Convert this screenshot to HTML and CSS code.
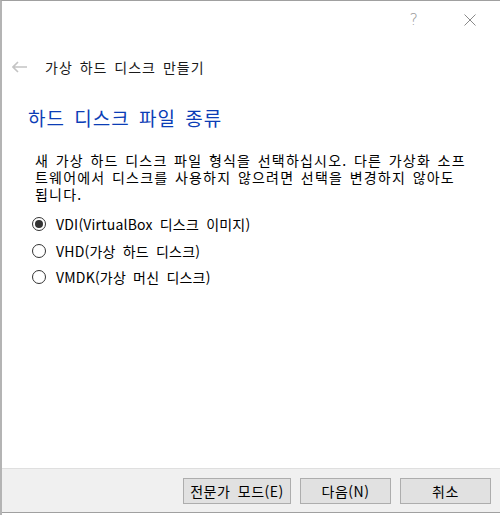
FILE: index.html
```html
<!DOCTYPE html>
<html lang="ko">
<head>
    <meta charset="UTF-8">
    <title>가상 하드 디스크 만들기</title>
    <link rel="stylesheet" href="styles.css">
</head>
<body>
    <div class="window">
        <div class="titlebar">
            <span class="help">?</span>
            <svg class="close" width="12" height="12" viewBox="0 0 12 12">
                <path d="M0.5 0.5 L11.5 11.5 M11.5 0.5 L0.5 11.5" stroke="#8a8a8a" stroke-width="1" fill="none"/>
            </svg>
        </div>

        <div class="header">
            <svg class="back" width="16" height="12" viewBox="0 0 16 12">
                <path d="M1 6 H15 M6 1 L1 6 L6 11" stroke="#c4c4c4" stroke-width="1.6" fill="none"/>
            </svg>
            <span class="title">가상 하드 디스크 만들기</span>
        </div>

        <div class="page">
            <h2 class="heading">하드 디스크 파일 종류</h2>
            <p class="desc">새 가상 하드 디스크 파일 형식을 선택하십시오. 다른 가상화 소프트웨어에서 디스크를 사용하지 않으려면 선택을 변경하지 않아도 됩니다.</p>

            <div class="options">
                <label class="option">
                    <input type="radio" name="format" checked>
                    <span>VDI(VirtualBox 디스크 이미지)</span>
                </label>
                <label class="option">
                    <input type="radio" name="format">
                    <span>VHD(가상 하드 디스크)</span>
                </label>
                <label class="option">
                    <input type="radio" name="format">
                    <span>VMDK(가상 머신 디스크)</span>
                </label>
            </div>
        </div>

        <div class="footer">
            <button class="btn btn-wide">전문가 모드(E)</button>
            <button class="btn">다음(N)</button>
            <button class="btn">취소</button>
        </div>
    </div>
</body>
</html>
```

FILE: styles.css
```css
* {
    box-sizing: border-box;
    margin: 0;
    padding: 0;
}

body {
    font-family: "Noto Sans CJK KR", "Noto Sans", sans-serif;
    font-size: 14px;
    color: #000;
    background: #fff;
}

.window {
    height: 515px;
    display: flex;
    flex-direction: column;
    border-top: 1px solid #a0a0a0;
    border-left: 2px solid #b4b4b4;
}

.titlebar {
    height: 36px;
    display: flex;
    justify-content: flex-end;
    align-items: center;
    gap: 46px;
    padding-right: 24px;
}

.help {
    color: #9a9a9a;
    font-family: "DejaVu Sans", sans-serif;
    font-size: 16px;
    font-weight: 300;
}

.close {
    margin-top: 2px;
}

.header {
    height: 60px;
    display: flex;
    align-items: center;
    padding-left: 10px;
    gap: 17px;
}

.title {
    font-size: 14px;
    color: #1a1a1a;
    letter-spacing: 1px;
    word-spacing: 2px;
}

.page {
    padding: 0 24px 0 26px;
}

.heading {
    font-size: 19px;
    font-weight: 400;
    line-height: 28px;
    margin-top: 7px;
    color: #0b3db6;
    letter-spacing: 1px;
    word-spacing: 3px;
}

.desc {
    margin-top: 20px;
    padding-left: 7px;
    width: 444px;
    font-size: 14px;
    line-height: 17px;
    letter-spacing: 1.2px;
    word-spacing: 1.5px;
}

.options {
    margin-top: 8px;
    display: flex;
    flex-direction: column;
}

.option {
    height: 26.5px;
    display: flex;
    align-items: center;
    gap: 10px;
    padding-left: 4px;
    font-size: 14px;
    letter-spacing: 0.2px;
    word-spacing: 3px;
}

.option input {
    appearance: none;
    width: 14px;
    height: 14px;
    border: 1px solid #333;
    border-radius: 50%;
    display: grid;
    place-items: center;
    margin: 0;
}

.option input:checked::after {
    content: "";
    width: 8px;
    height: 8px;
    border-radius: 50%;
    background: #333;
}

.footer {
    margin-top: auto;
    margin-bottom: 2px;
    height: 45px;
    background: #f0f0f0;
    border-top: 1px solid #dfdfdf;
    border-bottom: 1px solid #a0a0a0;
    display: flex;
    justify-content: flex-end;
    gap: 9px;
    padding: 9px 9px 0 0;
}

.btn {
    width: 91px;
    height: 26px;
    background: #e1e1e1;
    border: 1px solid #adadad;
    font-family: inherit;
    font-size: 14px;
    color: #000;
    letter-spacing: 0.5px;
    word-spacing: 3px;
}

.btn-wide {
    width: 108px;
}
```
